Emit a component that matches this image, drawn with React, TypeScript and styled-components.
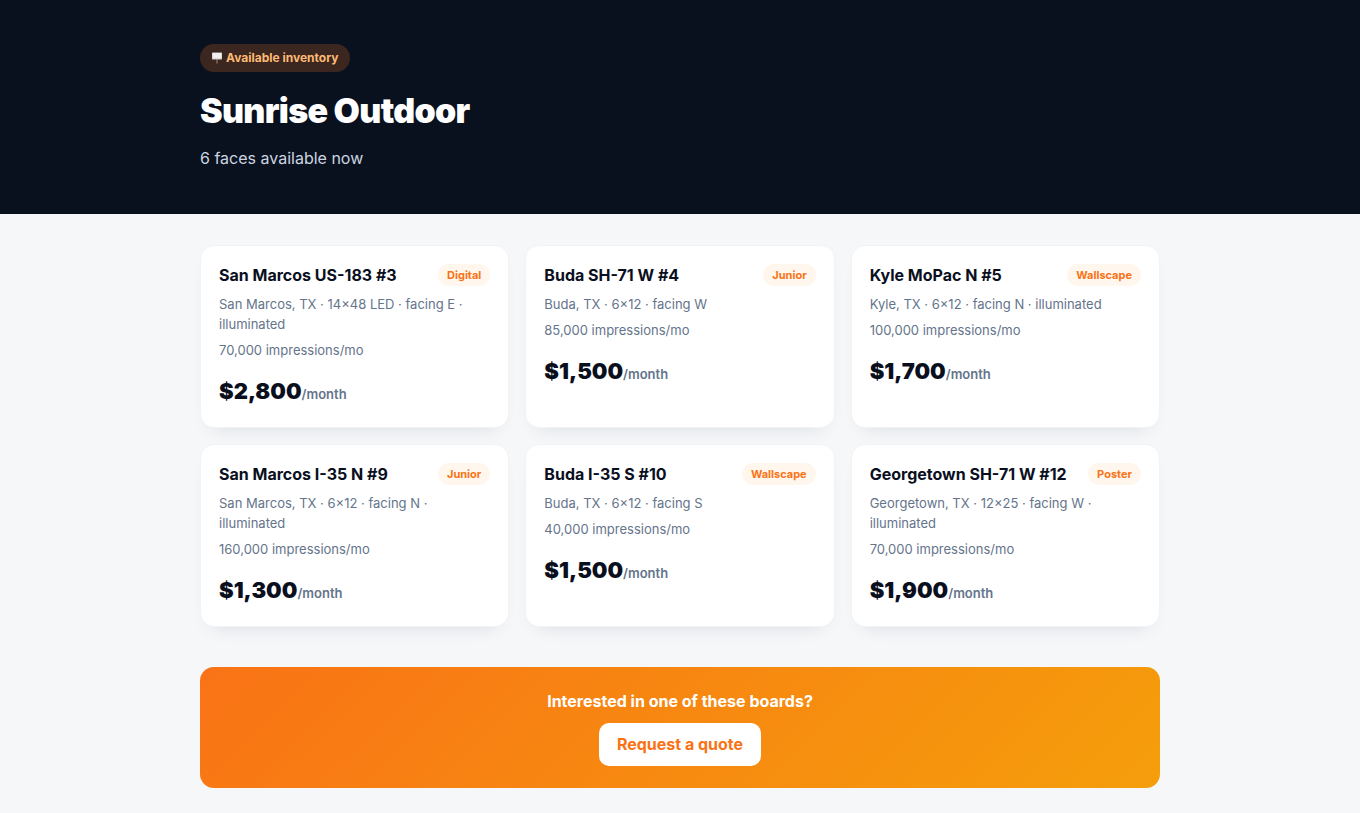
import React from "react";
import styled, { createGlobalStyle } from "styled-components";

const GlobalStyle = createGlobalStyle`
  *, *::before, *::after { box-sizing: border-box; }
  body {
    margin: 0;
    background: #f5f7f9;
    color: #0a0f1e;
    font-family: Inter, "Liberation Sans", sans-serif;
    font-size: 16px;
    line-height: 24px;
  }
`;

const Hero = styled.header`
  background: #0a111e;
  padding: 44px 24px;
`;

const Container = styled.div`
  max-width: 960px;
  margin: 0 auto;
`;

const Eyebrow = styled.span`
  display: inline-flex;
  align-items: center;
  gap: 3px;
  padding: 4px 11px;
  border-radius: 999px;
  background: #3b2620;
  color: #fdba74;
  font-size: 12px;
  font-weight: 700;
  line-height: 20px;
`;

const Title = styled.h1`
  margin: 16px 0 12px;
  color: #fff;
  font-size: 34px;
  font-weight: 900;
  line-height: 46px;
  letter-spacing: -0.02em;
`;

const Subtitle = styled.p`
  margin: 0;
  color: #cbd5e1;
  font-size: 16px;
  line-height: 24px;
`;

const Main = styled.main`
  padding: 31px 24px 24px;
`;

const Grid = styled.section`
  display: grid;
  grid-template-columns: repeat(3, minmax(0, 1fr));
  gap: 16px;
`;

const Card = styled.article`
  padding: 18px;
  border: 1px solid #f1f3f6;
  border-radius: 14px;
  background: #fff;
  box-shadow: 0 10px 20px -12px rgba(15, 23, 42, 0.14);
`;

const CardHead = styled.div`
  display: flex;
  align-items: center;
  justify-content: space-between;
  gap: 8px;
  margin-bottom: 8px;
`;

const CardTitle = styled.h2`
  margin: 0;
  font-size: 16px;
  font-weight: 700;
  line-height: 22px;
`;

const Tag = styled.span`
  padding: 2px 9px;
  border-radius: 999px;
  background: #fff7ed;
  color: #f97316;
  font-size: 11px;
  font-weight: 700;
  line-height: 18px;
`;

const Detail = styled.p`
  margin: 0 0 6px;
  color: #64748b;
  font-size: 13px;
  line-height: 20px;
`;

const Price = styled.p`
  margin: 13px 0 0;
  font-size: 22px;
  font-weight: 900;
  line-height: 36px;
`;

const Period = styled.span`
  color: #64748b;
  font-size: 13px;
  font-weight: 600;
  line-height: 20px;
`;

const Banner = styled.section`
  display: flex;
  flex-direction: column;
  align-items: center;
  gap: 10px;
  margin-top: 40px;
  padding: 22px;
  border-radius: 14px;
  background: linear-gradient(135deg, #f97316, #f59e0b);
`;

const BannerText = styled.p`
  margin: 0;
  color: #fff;
  font-size: 16px;
  font-weight: 700;
  line-height: 24px;
`;

const QuoteButton = styled.button`
  padding: 9px 18px;
  border: 0;
  border-radius: 10px;
  background: #fff;
  color: #f97316;
  font: inherit;
  font-weight: 700;
  line-height: 25px;
  cursor: pointer;
`;

const faces = [
  { name: "San Marcos US-183 #3", type: "Digital", detail: "San Marcos, TX · 14×48 LED · facing E · illuminated", views: "70,000", price: "$2,800" },
  { name: "Buda SH-71 W #4", type: "Junior", detail: "Buda, TX · 6×12 · facing W", views: "85,000", price: "$1,500" },
  { name: "Kyle MoPac N #5", type: "Wallscape", detail: "Kyle, TX · 6×12 · facing N · illuminated", views: "100,000", price: "$1,700" },
  { name: "San Marcos I-35 N #9", type: "Junior", detail: "San Marcos, TX · 6×12 · facing N · illuminated", views: "160,000", price: "$1,300" },
  { name: "Buda I-35 S #10", type: "Wallscape", detail: "Buda, TX · 6×12 · facing S", views: "40,000", price: "$1,500" },
  { name: "Georgetown SH-71 W #12", type: "Poster", detail: "Georgetown, TX · 12×25 · facing W · illuminated", views: "70,000", price: "$1,900" },
];

function SignIcon() {
  return (
    <svg width="12" height="12" viewBox="0 0 12 12" aria-hidden="true">
      <rect x="5.5" y="7" width="1" height="4.5" fill="#a08a7c" />
      <rect x="1" y="0.5" width="10" height="7" rx="0.5" fill="#c9c5c2" />
      <rect x="1.5" y="1" width="9" height="5.5" fill="#f1f0ee" />
    </svg>
  );
}

export default function App() {
  return (
    <>
      <GlobalStyle />
      <Hero>
        <Container>
          <Eyebrow>
            <SignIcon />
            Available inventory
          </Eyebrow>
          <Title>Sunrise Outdoor</Title>
          <Subtitle>{faces.length} faces available now</Subtitle>
        </Container>
      </Hero>
      <Main>
        <Container>
          <Grid>
            {faces.map((face) => (
              <Card key={face.name}>
                <CardHead>
                  <CardTitle>{face.name}</CardTitle>
                  <Tag>{face.type}</Tag>
                </CardHead>
                <Detail>{face.detail}</Detail>
                <Detail>{face.views} impressions/mo</Detail>
                <Price>
                  {face.price}
                  <Period>/month</Period>
                </Price>
              </Card>
            ))}
          </Grid>
          <Banner>
            <BannerText>Interested in one of these boards?</BannerText>
            <QuoteButton type="button">Request a quote</QuoteButton>
          </Banner>
        </Container>
      </Main>
    </>
  );
}
